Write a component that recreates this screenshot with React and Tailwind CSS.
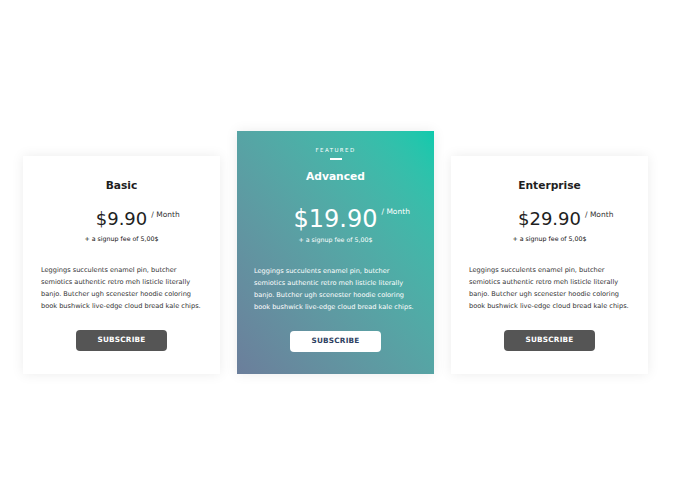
import React from "react";

const font = { fontFamily: '"DejaVu Sans", "Noto Sans", sans-serif' };

const Desc = () => (
  <>
    Leggings succulents enamel pin, butcher
    <br />
    semiotics authentic retro meh listicle literally
    <br />
    banjo. Butcher ugh scenester hoodie coloring
    <br />
    book bushwick live-edge cloud bread kale chips.
  </>
);

function Price({ amount, big, light }) {
  return (
    <div className="flex flex-col items-center">
      <div className="relative">
        <span
          className={
            (big ? "text-[24px] " : "text-[18px] ") +
            (light ? "text-white " : "text-[#1f1f1f] ") +
            "block leading-none font-normal"
          }
        >
          {amount}
        </span>
        <span
          className={
            "absolute left-full top-[1px] ml-[4px] whitespace-nowrap text-[7.5px] leading-none " +
            (light ? "text-white" : "text-[#333]")
          }
        >
          / Month
        </span>
      </div>
      <div
        className={
          "whitespace-nowrap text-[6.3px] leading-none " +
          (big ? "mt-[6px] " : "mt-[8px] ") +
          (light ? "text-white" : "text-[#111]")
        }
      >
        + a signup fee of 5,00$
      </div>
    </div>
  );
}

function Card({ title, amount }) {
  return (
    <div className="flex h-[218px] w-[197px] flex-col items-center bg-white px-[18px] pt-[23px] shadow-[0_0_12px_rgba(0,0,0,0.08)]">
      <div className="text-[10.7px] font-bold leading-[14px] text-[#1f1f1f]">{title}</div>
      <div className="mt-[17px]">
        <Price amount={amount} />
      </div>
      <p className="mt-[22px] w-full whitespace-nowrap text-[6.6px] leading-[12px] text-[#333]">
        <Desc />
      </p>
      <button className="mt-[18px] flex h-[21px] w-[91px] shrink-0 items-center justify-center rounded-[4px] bg-[#555555] text-[7.3px] font-bold tracking-[0.2px] text-white">
        SUBSCRIBE
      </button>
    </div>
  );
}

function Featured() {
  return (
    <div className="flex h-[243px] w-[197px] flex-col items-center bg-gradient-to-tr from-[#6b7e9b] to-[#0ccaad] px-[17px] pt-[16px] shadow-[0_0_12px_rgba(0,0,0,0.08)]">
      <div className="text-[5.5px] leading-[7px] tracking-[1.4px] text-white">FEATURED</div>
      <div className="mt-[4px] h-[1.5px] w-[12px] bg-white" />
      <div className="mt-[10px] text-[10.7px] font-bold leading-[14px] text-white">Advanced</div>
      <div className="mt-[23px]">
        <Price amount="$19.90" big light />
      </div>
      <p className="mt-[22px] w-full whitespace-nowrap text-[6.6px] leading-[12px] text-white">
        <Desc />
      </p>
      <button className="mt-[18px] flex h-[21px] w-[91px] shrink-0 items-center justify-center rounded-[4px] bg-white text-[7.3px] font-bold tracking-[0.2px] text-[#2f4263]">
        SUBSCRIBE
      </button>
    </div>
  );
}

export default function App() {
  return (
    <div className="h-[500px] w-[680px] bg-white" style={font}>
      <div className="flex items-end gap-[17px] pl-[23px] pt-[131px]">
        <Card title="Basic" amount="$9.90" />
        <Featured />
        <Card title="Enterprise" amount="$29.90" />
      </div>
    </div>
  );
}
